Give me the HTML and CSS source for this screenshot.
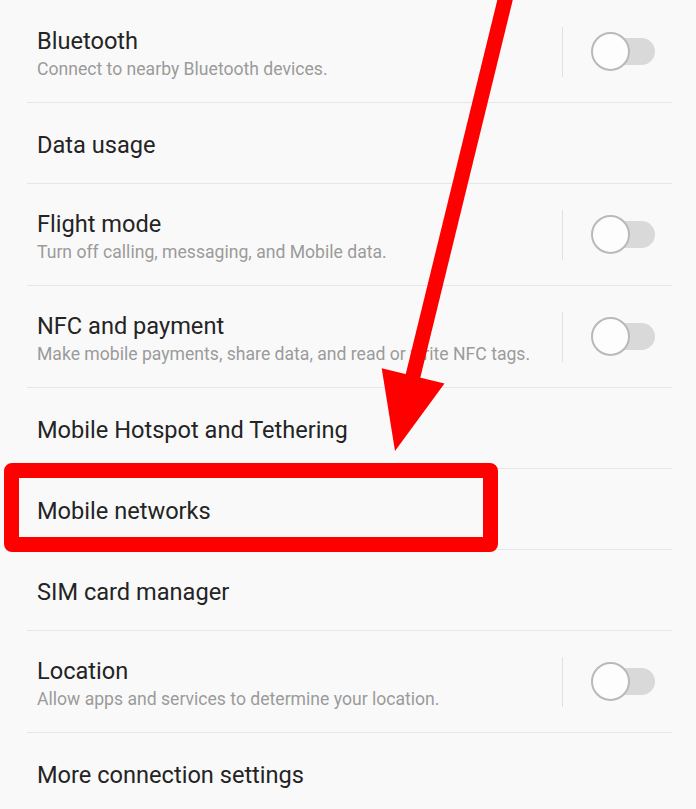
FILE: index.html
```html
<!DOCTYPE html>
<html lang="en">
<head>
<meta charset="utf-8">
<link rel="stylesheet" href="styles.css">
</head>
<body>
<div class="page">
  <ul class="list">
    <li class="row two">
      <div class="text">
        <div class="title">Bluetooth</div>
        <div class="sub">Connect to nearby Bluetooth devices.</div>
      </div>
      <div class="sep"></div>
      <div class="switch"><span class="knob"></span></div>
    </li>
    <li class="row one">
      <div class="text"><div class="title">Data usage</div></div>
    </li>
    <li class="row two">
      <div class="text">
        <div class="title">Flight mode</div>
        <div class="sub">Turn off calling, messaging, and Mobile data.</div>
      </div>
      <div class="sep"></div>
      <div class="switch"><span class="knob"></span></div>
    </li>
    <li class="row two">
      <div class="text">
        <div class="title">NFC and payment</div>
        <div class="sub">Make mobile payments, share data, and read or write NFC tags.</div>
      </div>
      <div class="sep"></div>
      <div class="switch"><span class="knob"></span></div>
    </li>
    <li class="row one">
      <div class="text"><div class="title">Mobile Hotspot and Tethering</div></div>
    </li>
    <li class="row one">
      <div class="text"><div class="title">Mobile networks</div></div>
    </li>
    <li class="row one">
      <div class="text"><div class="title">SIM card manager</div></div>
    </li>
    <li class="row two">
      <div class="text">
        <div class="title">Location</div>
        <div class="sub">Allow apps and services to determine your location.</div>
      </div>
      <div class="sep"></div>
      <div class="switch"><span class="knob"></span></div>
    </li>
    <li class="row one">
      <div class="text"><div class="title">More connection settings</div></div>
    </li>
  </ul>

  <div class="highlight"></div>
  <svg class="arrow" width="696" height="809" viewBox="0 0 696 809" aria-hidden="true">
    <line x1="507" y1="-8" x2="412" y2="380" stroke="#ff0000" stroke-width="15"/>
    <polygon points="381.7,368.3 444.5,383.5 395,451" fill="#ff0000"/>
  </svg>
</div>
</body>
</html>
```

FILE: styles.css
```css
html, body {
  margin: 0;
  padding: 0;
  background: #f9f9f9;
}

body {
  font-family: Roboto, "Noto Sans", "Liberation Sans", sans-serif;
  width: 696px;
  height: 809px;
  overflow: hidden;
}

.page {
  position: relative;
  width: 696px;
  height: 809px;
}

.list {
  list-style: none;
  margin: 0;
  padding: 1px 0 0 0;
}

.row {
  display: flex;
  align-items: center;
  margin: 0 24px 0 27px;
  padding-left: 10px;
  border-bottom: 1px solid #e6e6e6;
  box-sizing: border-box;
}

.row.two {
  height: 102px;
}

.row.one {
  height: 81px;
}

.text {
  flex: 1;
  min-width: 0;
}

.row.two .text {
  padding-top: 5px;
}

.row.one .text {
  padding-top: 4px;
}

.title {
  font-size: 23.6px;
  line-height: 30px;
  color: #242424;
  white-space: nowrap;
}

.sub {
  font-size: 17.6px;
  line-height: 26px;
  color: #9b9b9b;
  white-space: nowrap;
}

.sep {
  width: 1px;
  height: 50px;
  background: #e0e0e0;
  margin-right: 29px;
}

.switch {
  position: relative;
  width: 63px;
  height: 27px;
  margin-right: 17px;
  border-radius: 14px;
  background: #d9d9d9;
}

.knob {
  position: absolute;
  left: -1px;
  top: -6px;
  width: 35px;
  height: 35px;
  border-radius: 50%;
  background: #fdfdfd;
  border: 2px solid #b9b9b9;
}

.highlight {
  position: absolute;
  left: 4px;
  top: 463px;
  width: 494px;
  height: 89px;
  box-sizing: border-box;
  border: 15px solid #ff0000;
  border-radius: 8px;
}

.arrow {
  position: absolute;
  left: 0;
  top: 0;
  pointer-events: none;
}
```
